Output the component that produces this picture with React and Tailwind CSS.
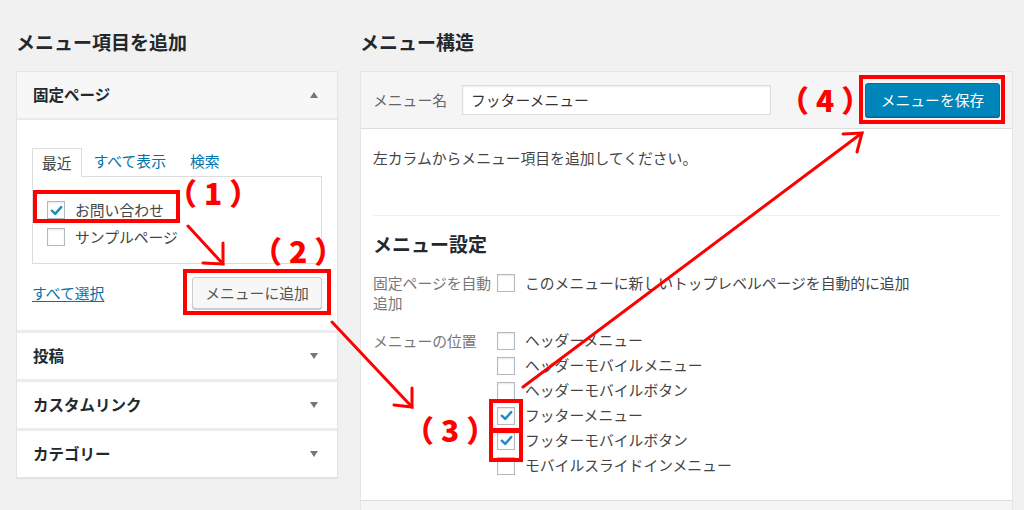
import React from 'react';

const Check = () => (
  <svg viewBox="0 0 16 16" className="w-[15px] h-[15px]">
    <path d="M3 8.2 L6.6 11.6 L13 4.4" fill="none" stroke="#1e8cbe" strokeWidth="2.6" strokeLinecap="round" strokeLinejoin="round" />
  </svg>
);

const Box = ({ checked }) => (
  <span className="w-[18px] h-[18px] shrink-0 border border-[#b4b9be] bg-white shadow-[inset_0_1px_2px_rgba(0,0,0,0.1)] flex items-center justify-center">
    {checked && <Check />}
  </span>
);

const Tri = ({ up }) => (
  <svg viewBox="0 0 10 8" className="w-[10px] h-[8px]">
    <path d={up ? 'M1 7 L5 1 L9 7 Z' : 'M1 1 L5 7 L9 1 Z'} fill="#72777c" />
  </svg>
);

const Section = ({ title }) => (
  <div className="h-[49px] bg-white flex items-center justify-between pl-[16px] pr-[18px] border-t-[3px] border-[#ececec]">
    <span className="font-bold text-[15.5px] text-[#23282d]">{title}</span>
    <Tri />
  </div>
);

const Label = ({ text, className }) => (
  <div className={`absolute text-[#ff0000] font-black text-[30px] leading-[28px] tracking-[7px] ${className}`}>{text}</div>
);

const locations = [
  ['ヘッダーメニュー', false],
  ['ヘッダーモバイルメニュー', false],
  ['ヘッダーモバイルボタン', false],
  ['フッターメニュー', true],
  ['フッターモバイルボタン', true],
  ['モバイルスライドインメニュー', false],
];

export default function App() {
  return (
    <div className="relative w-[1024px] h-[510px] overflow-hidden bg-[#f1f1f1] font-['Noto_Sans_CJK_JP',sans-serif] text-[14.8px] text-[#444]">
      <div className="flex pt-[29px]">
        {/* left column */}
        <div className="ml-[16px] w-[322px]">
          <h2 className="text-[19px] leading-[26px] font-bold text-[#23282d] mb-[16px]">メニュー項目を追加</h2>
          <div className="border border-[#e5e5e5] shadow-[0_1px_1px_rgba(0,0,0,0.06)]">
            <div className="h-[48px] bg-[#f7f7f7] border-b-2 border-[#e9e9e9] flex items-center justify-between pl-[16px] pr-[18px]">
              <span className="font-bold text-[15.5px] text-[#23282d]">固定ページ</span>
              <Tri up />
            </div>
            <div className="bg-white px-[15px] pt-[27px] pb-[21px]">
              <div className="flex items-end h-[29px]">
                <span className="h-[29px] px-[9px] flex items-center border border-b-0 border-[#dddddd] bg-white text-[#444] relative top-[1px]">最近</span>
                <span className="ml-[12px] mb-[6px] leading-[18px] text-[#0073aa]">すべて表示</span>
                <span className="ml-[24px] mb-[6px] leading-[18px] text-[#0073aa]">検索</span>
              </div>
              <div className="h-[88px] border border-[#dddddd] bg-white pt-[24px] pl-[14px]">
                <div className="flex items-center gap-[10px] h-[18px]">
                  <Box checked />
                  <span>お問い合わせ</span>
                </div>
                <div className="flex items-center gap-[10px] h-[18px] mt-[9px]">
                  <Box />
                  <span>サンプルページ</span>
                </div>
              </div>
              <div className="flex items-center justify-between mt-[13px]">
                <span className="text-[#0073aa] underline underline-offset-2">すべて選択</span>
                <button className="h-[32px] w-[130px] rounded-[3px] border border-[#cccccc] bg-[#f7f7f7] text-[#555] shadow-[0_1px_0_#cccccc]">
                  メニューに追加
                </button>
              </div>
            </div>
            <Section title="投稿" />
            <Section title="カスタムリンク" />
            <Section title="カテゴリー" />
          </div>
        </div>

        {/* right column */}
        <div className="ml-[22px] w-[653px]">
          <h2 className="text-[19px] leading-[26px] font-bold text-[#23282d] mb-[16px]">メニュー構造</h2>
          <div className="border border-[#e5e5e5] bg-white">
            <div className="h-[57px] bg-[#f5f5f5] border-b border-[#dddddd] flex items-center pl-[12px] pr-[12px]">
              <span className="text-[#666] w-[89px]">メニュー名</span>
              <div className="w-[309px] h-[30px] border border-[#dddddd] bg-white flex items-center pl-[8px] text-[#333] shadow-[inset_0_1px_2px_rgba(0,0,0,0.07)]">
                フッターメニュー
              </div>
              <div className="flex-1" />
              <button className="w-[135px] h-[34px] rounded-[3px] bg-[#0085ba] border border-[#0073aa] text-white shadow-[0_1px_0_#006799]">
                メニューを保存
              </button>
            </div>
            <div className="px-[12px] pt-[19px] pb-[22px]">
              <p className="leading-[20px]">左カラムからメニュー項目を追加してください。</p>
              <div className="border-t border-[#eeeeee] mt-[47px]" />
              <h3 className="text-[19px] leading-[26px] font-bold text-[#23282d] mt-[15px]">メニュー設定</h3>
              <div className="flex mt-[16px]">
                <div className="w-[124px] text-[#777] leading-[20px]">固定ページを自動<br />追加</div>
                <div className="flex gap-[10px] pt-[1px]">
                  <Box />
                  <span className="leading-[20px] -mt-[1px]">このメニューに新しいトップレベルページを自動的に追加</span>
                </div>
              </div>
              <div className="flex mt-[15px]">
                <div className="w-[124px] text-[#777] leading-[25px]">メニューの位置</div>
                <div className="flex flex-col">
                  {locations.map(([name, on]) => (
                    <div key={name} className="flex items-center gap-[10px] h-[25px]">
                      <Box checked={on} />
                      <span>{name}</span>
                    </div>
                  ))}
                </div>
              </div>
            </div>
            <div className="h-[20px] bg-[#f5f5f5] border-t border-[#dddddd]" />
          </div>
        </div>
      </div>

      {/* annotations */}
      <svg className="absolute inset-0 w-full h-full pointer-events-none" viewBox="0 0 1024 510">
        <g stroke="#ff0000" strokeWidth="3" fill="none" strokeLinecap="round">
          <line x1="188" y1="226" x2="223" y2="264" />
          <polyline points="223,243 223,264 203,263" />
          <line x1="332" y1="322" x2="412" y2="407" />
          <polyline points="412,388 412,407 394,405" />
          <line x1="523" y1="387" x2="862" y2="133" />
          <polyline points="843,134 862,133 857,152" />
        </g>
      </svg>
      <div className="absolute left-[33px] top-[190px] w-[147px] h-[33px] border-4 border-[#ff0000]" />
      <div className="absolute left-[183px] top-[269px] w-[148px] h-[46px] border-4 border-[#ff0000]" />
      <div className="absolute left-[489px] top-[399px] w-[34px] h-[33px] border-4 border-[#ff0000]" />
      <div className="absolute left-[489px] top-[429px] w-[34px] h-[33px] border-4 border-[#ff0000]" />
      <div className="absolute left-[859px] top-[75px] w-[146px] h-[49px] border-4 border-[#ff0000]" />
      <Label text="（1）" className="left-[167px] top-[178px]" />
      <Label text="（2）" className="left-[252px] top-[236px]" />
      <Label text="（3）" className="left-[404px] top-[415px]" />
      <Label text="（4）" className="left-[779px] top-[85px]" />
    </div>
  );
}
